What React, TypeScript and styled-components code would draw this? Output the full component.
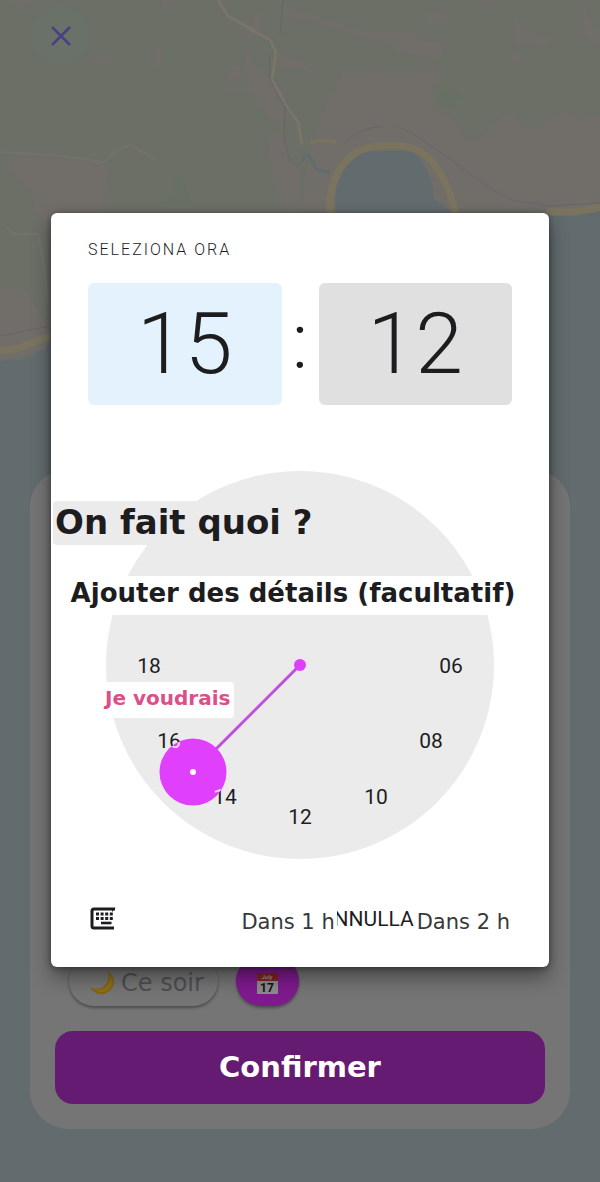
import React from "react";
import styled, { createGlobalStyle } from "styled-components";

const roboto = `Roboto, "Liberation Sans", sans-serif`;
const dejavu = `"DejaVu Sans", "Liberation Sans", sans-serif`;

const GlobalStyle = createGlobalStyle`
  *, *::before, *::after { box-sizing: border-box; }
  body { margin: 0; background: #626b6e; font-family: ${dejavu}; }
  button { border: 0; padding: 0; margin: 0; font: inherit; color: inherit; background: none; cursor: pointer; }
  h1, h2, p { margin: 0; }
`;

const Page = styled.div`
  position: relative;
  isolation: isolate;
  display: flex;
  flex-direction: column;
  min-height: 100vh;
  padding-bottom: 53px;
  overflow: hidden;
`;

const MapSvg = styled.svg`
  position: absolute;
  inset: 0;
  z-index: -1;
  width: 100%;
  height: 100%;
`;

const TopBar = styled.header`
  flex: 0 0 calc(40vh - 4px);
  padding: 5px 30px;
`;

const CloseButton = styled.button`
  display: flex;
  align-items: center;
  justify-content: center;
  width: 61px;
  height: 61px;
  border-radius: 50%;
  background: #697168;
`;

const Sheet = styled.section`
  flex: 1;
  display: flex;
  flex-direction: column;
  justify-content: flex-end;
  gap: 25px;
  margin: 0 30px;
  padding: 25px;
  border-radius: 38px;
  background: #757575;
`;

const Chips = styled.div`
  display: flex;
  gap: 18px;
  padding-left: 14px;
`;

const Chip = styled.button<{ $filled?: boolean }>`
  display: flex;
  align-items: center;
  justify-content: center;
  gap: 6px;
  height: 50px;
  padding: 4px ${(p) => (p.$filled ? 20 : 14)}px 0 20px;
  border-radius: 25px;
  background: ${(p) => (p.$filled ? "#7f1a8e" : "#757575")};
  color: #504e54;
  font-size: 24px;
  line-height: 36px;
  box-shadow: 0 2px 3px rgba(0, 0, 0, 0.35);
`;

const Confirm = styled.button`
  height: 73px;
  padding-bottom: 2px;
  border-radius: 18px;
  background: #661b72;
  color: #fff;
  font-weight: 700;
  font-size: 29px;
  line-height: 36px;
`;

const Overlay = styled.div`
  position: absolute;
  inset: 0;
  display: flex;
  align-items: center;
  justify-content: center;
  padding: 0 51px 2px;
`;

const Dialog = styled.div`
  flex: 1;
  max-width: 560px;
  padding-top: 27px;
  border-radius: 6px;
  background: #fff;
  color: #1d1d1f;
  box-shadow: 0 10px 20px rgba(0, 0, 0, 0.4), 0 1px 6px rgba(0, 0, 0, 0.4);
`;

const Title = styled.h1`
  padding: 0 37px;
  font: 300 16px/20px ${roboto};
  letter-spacing: 2px;
`;

const TimeRow = styled.div`
  display: grid;
  grid-template-columns: 1fr 37px 1fr;
  align-items: center;
  margin: 23px 37px 66px;
  font: 300 86px/122px ${roboto};
  text-align: center;
`;

const Colon = styled.span`
  padding-bottom: 4px;
  font-size: 78px;
  line-height: 118px;
`;

const TimeField = styled.button<{ $active?: boolean }>`
  height: 122px;
  border-radius: 6px;
  background: ${(p) => (p.$active ? "#e3f2fd" : "#e0e0e0")};
`;

const Clock = styled.div`
  display: grid;
  justify-items: center;
`;

const Dial = styled.svg`
  grid-area: 1 / 1;
  width: 388px;
  max-width: 100%;
  font: 400 21px ${roboto};
`;

const Notes = styled.div`
  grid-area: 1 / 1;
  justify-self: stretch;
  display: flex;
  flex-direction: column;
  align-items: flex-start;
  padding: 30px 2px 0;
  font-weight: 700;
  white-space: nowrap;
`;

const Question = styled.h2`
  padding: 0 2px 2px;
  border-radius: 4px;
  background: #ebebeb;
  font-size: 34px;
  line-height: 42px;
`;

const Details = styled.p`
  align-self: stretch;
  margin: 31px 0 67px;
  padding: 0 14px 4px 0;
  background: #fff;
  font-size: 26px;
  line-height: 35px;
  text-align: center;
`;

const Wish = styled.p`
  margin-left: 48px;
  padding: 0 4px 4px;
  border-radius: 4px;
  background: #fff;
  color: #db5088;
  font-size: 20px;
  line-height: 32px;
`;

const Footer = styled.footer`
  display: flex;
  align-items: center;
  height: 108px;
  padding: 14px 37px 0 38px;
`;

const Actions = styled.div`
  display: flex;
  align-items: center;
  margin-left: auto;
  font-size: 21px;
  line-height: 34px;
  color: #38383b;
  white-space: nowrap;
`;

const ShortcutButton = styled.button`
  padding: 4px 2px 0;
`;

const CancelButton = styled.button`
  display: flex;
  justify-content: flex-end;
  width: 78px;
  padding: 0 1px 2px 0;
  overflow: hidden;
  font: 400 21px/32px ${roboto};
  color: #1d1d1f;
`;

const HOURS = [
  { label: "18", x: 43, y: 194 },
  { label: "06", x: 345, y: 194 },
  { label: "16", x: 63, y: 269 },
  { label: "08", x: 325, y: 269 },
  { label: "14", x: 119, y: 325 },
  { label: "10", x: 270, y: 325 },
  { label: "12", x: 194, y: 345 },
];

const Hours = ({ fill }: { fill: string }) => (
  <g fill={fill} textAnchor="middle">
    {HOURS.map((h) => (
      <text key={h.label} x={h.x} y={h.y + 8}>{h.label}</text>
    ))}
  </g>
);

const CoastMap = () => (
  <MapSvg viewBox="0 0 600 1182" preserveAspectRatio="xMidYMin slice" aria-hidden="true">
    <rect width="600" height="1182" fill="#626b6e" />
    <path d="M0 0H600V212L575 215L549 214L520 240H60L50 343L40 347L36 354L25 358L20 361L12 359L0 361Z" fill="#6b6f66" />
    <g fill="#716e6a">
      <path d="M5 158L30 152L60 155L100 161L109 165L107 186L105 209L90 220H38L32 195L12 172Z" />
      <path d="M0 288C20 280 32 292 40 315L50 326L45 350L0 361Z" />
      <path d="M8 0H32L24 11Z" />
      <path d="M160 0H169L167 13ZM154 48L162 49L161 69L154 67ZM86 61L102 55L119 60L102 65Z" />
      <path d="M255 12L262 12L262 32L246 40ZM248 44L253 60L262 72L282 90L285 122L274 122L256 102L252 91L226 91L228 88L250 88L244 60Z" />
      <path d="M225 75L235 63L243 68L240 78L229 82Z" />
      <path d="M278 54L300 60L317 74L300 68L277 70Z" />
      <path d="M267 138L283 130L290 158L300 165L300 220H294L272 180Z" />
      <path d="M284 6L320 17L362 30L415 31L420 40L448 42L440 60L396 52L393 44L362 38L320 24L284 16Z" />
      <path d="M425 14L434 9L452 20L430 26Z" />
      <path d="M343 72L380 72L381 64L386 73L445 70L430 92L436 112L450 116L458 124L464 138L480 140L492 124L506 114L514 112L520 127L540 126L556 113L565 112L580 118L600 115V210L549 210H300L308 165L318 120Z" />
      <path d="M470 10L490 0L496 4ZM515 8L520 28L552 38L545 46L514 44ZM584 0L590 20L600 34V50L582 34ZM506 66L516 50L521 60L508 68Z" />
    </g>
    <path d="M438 94L452 88L463 98L449 108L440 104Z" fill="#677062" />
    <path d="M174 170L184 180L191 204L160 204L175 192Z" fill="#687063" />
    <g fill="none" stroke="#79756a" strokeWidth="3">
      <path d="M218 0L228 16L270 40L276 52L272 80L286 105L298 122L302 145" />
      <path d="M0 152L55 155L104 162L116 150L130 145L156 159" strokeWidth="2" stroke="#72736a" />
      <path d="M7 226L12 234H38L43 262L48 300" strokeWidth="2" stroke="#72736a" />
    </g>
    <g fill="none" stroke="#65656a" strokeWidth="1">
      <path d="M283 0L280 35M269 55L270 80L285 108L284 140L290 161L298 166L306 156" />
      <path d="M345 143C353 134 370 126 382 127M398 127C425 135 470 180 512 200L549 206L600 203" />
      <path d="M0 336L50 326" />
    </g>
    <path d="M303 158L309 155L316 169L330 173" fill="none" stroke="#626b6e" strokeWidth="3" />
    <path d="M338 214C328 185 350 150 375 151L411 151C425 160 433 180 434 199L443 204L454 216Z" fill="#626b6e" />
    <g fill="none" stroke="#7a745f" strokeWidth="7">
      <path d="M330 214C328 170 352 147 380 146C425 140 443 165 456 214" />
      <path d="M547 212L575 212L600 207" />
      <path d="M0 350C20 352 34 339 50 337" />
      <path d="M310 143L322 140L336 142" strokeWidth="3" />
    </g>
  </MapSvg>
);

const KeyboardIcon = () => (
  <svg width="27" height="23" viewBox="0 0 27 23" aria-hidden="true">
    <path d="M26 2H5Q3 2 3 4V19Q3 21 5 21H25" fill="none" stroke="#1d1d1f" strokeWidth="3" />
    <path d="M27 0.5L23 5V3Z" fill="#1d1d1f" />
    <path d="M7 7H24M7 11.500H24" stroke="#1d1d1f" strokeWidth="3" strokeDasharray="3 1.6" />
    <path d="M12 16H22.500" stroke="#1d1d1f" strokeWidth="2.600" />
  </svg>
);

const MoonIcon = () => (
  <svg width="26" height="26" viewBox="0 0 26 26" aria-hidden="true">
    <path d="M19 1C27 7 27 17 19 22C12 27 4 23 1 17C7 20 13 19 16 15C20 11 20 6 19 1Z" fill="#806513" />
    <path d="M20 4C25 9 24 16 19 20C14 24 8 22 5 19C12 21 17 18 19 14C21 10 21 7 20 4Z" fill="#8b701a" />
  </svg>
);

const CalendarIcon = () => (
  <svg width="23" height="23" viewBox="0 0 23 23" aria-hidden="true">
    <rect x="1" y="1" width="21" height="21" rx="1" fill="#8e8b8e" />
    <rect x="1" y="1" width="21" height="8" fill="#7c2722" />
    <text x="11" y="7" textAnchor="middle" fontFamily="Roboto, sans-serif" fontSize="6" fill="#aaa">July</text>
    <text x="11" y="20" textAnchor="middle" fontFamily="Roboto, sans-serif" fontWeight="700" fontSize="12" fill="#111">17</text>
  </svg>
);

export default function App() {
  return (
    <>
      <GlobalStyle />
      <Page>
        <CoastMap />
        <TopBar>
          <CloseButton aria-label="Fermer">
            <svg width="22" height="22" viewBox="0 0 22 22" aria-hidden="true">
              <path d="M2 2L20 20M20 2L2 20" stroke="#4a4180" strokeWidth="2.500" />
            </svg>
          </CloseButton>
        </TopBar>
        <Sheet>
          <Chips>
            <Chip><MoonIcon />Ce soir</Chip>
            <Chip $filled aria-label="Date"><CalendarIcon /></Chip>
          </Chips>
          <Confirm>Confirmer</Confirm>
        </Sheet>
        <Overlay>
          <Dialog role="dialog" aria-labelledby="time-title">
            <Title id="time-title">SELEZIONA ORA</Title>
            <TimeRow>
              <TimeField $active>15</TimeField>
              <Colon>:</Colon>
              <TimeField>12</TimeField>
            </TimeRow>
            <Clock>
              <Dial viewBox="0 0 388 388">
                <defs>
                  <clipPath id="knob"><circle cx="87" cy="301" r="33" /></clipPath>
                </defs>
                <circle cx="194" cy="194" r="194" fill="#ebebeb" />
                <Hours fill="#1d1d1f" />
                <path d="M194 194L87 301" stroke="#c04fdc" strokeWidth="3" />
                <circle cx="194" cy="194" r="6" fill="#e040fb" />
                <circle cx="87" cy="301" r="33.500" fill="#e040fb" />
                <g clipPath="url(#knob)"><Hours fill="#fbe3ff" /></g>
                <circle cx="87" cy="301" r="3" fill="#fff" />
              </Dial>
              <Notes>
                <Question>On fait quoi ?</Question>
                <Details>Ajouter des détails (facultatif)</Details>
                <Wish>Je voudrais</Wish>
              </Notes>
            </Clock>
            <Footer>
              <button aria-label="Tastiera"><KeyboardIcon /></button>
              <Actions>
                <ShortcutButton>Dans 1 h</ShortcutButton>
                <CancelButton>ANNULLA</CancelButton>
                <ShortcutButton>Dans 2 h</ShortcutButton>
              </Actions>
            </Footer>
          </Dialog>
        </Overlay>
      </Page>
    </>
  );
}
